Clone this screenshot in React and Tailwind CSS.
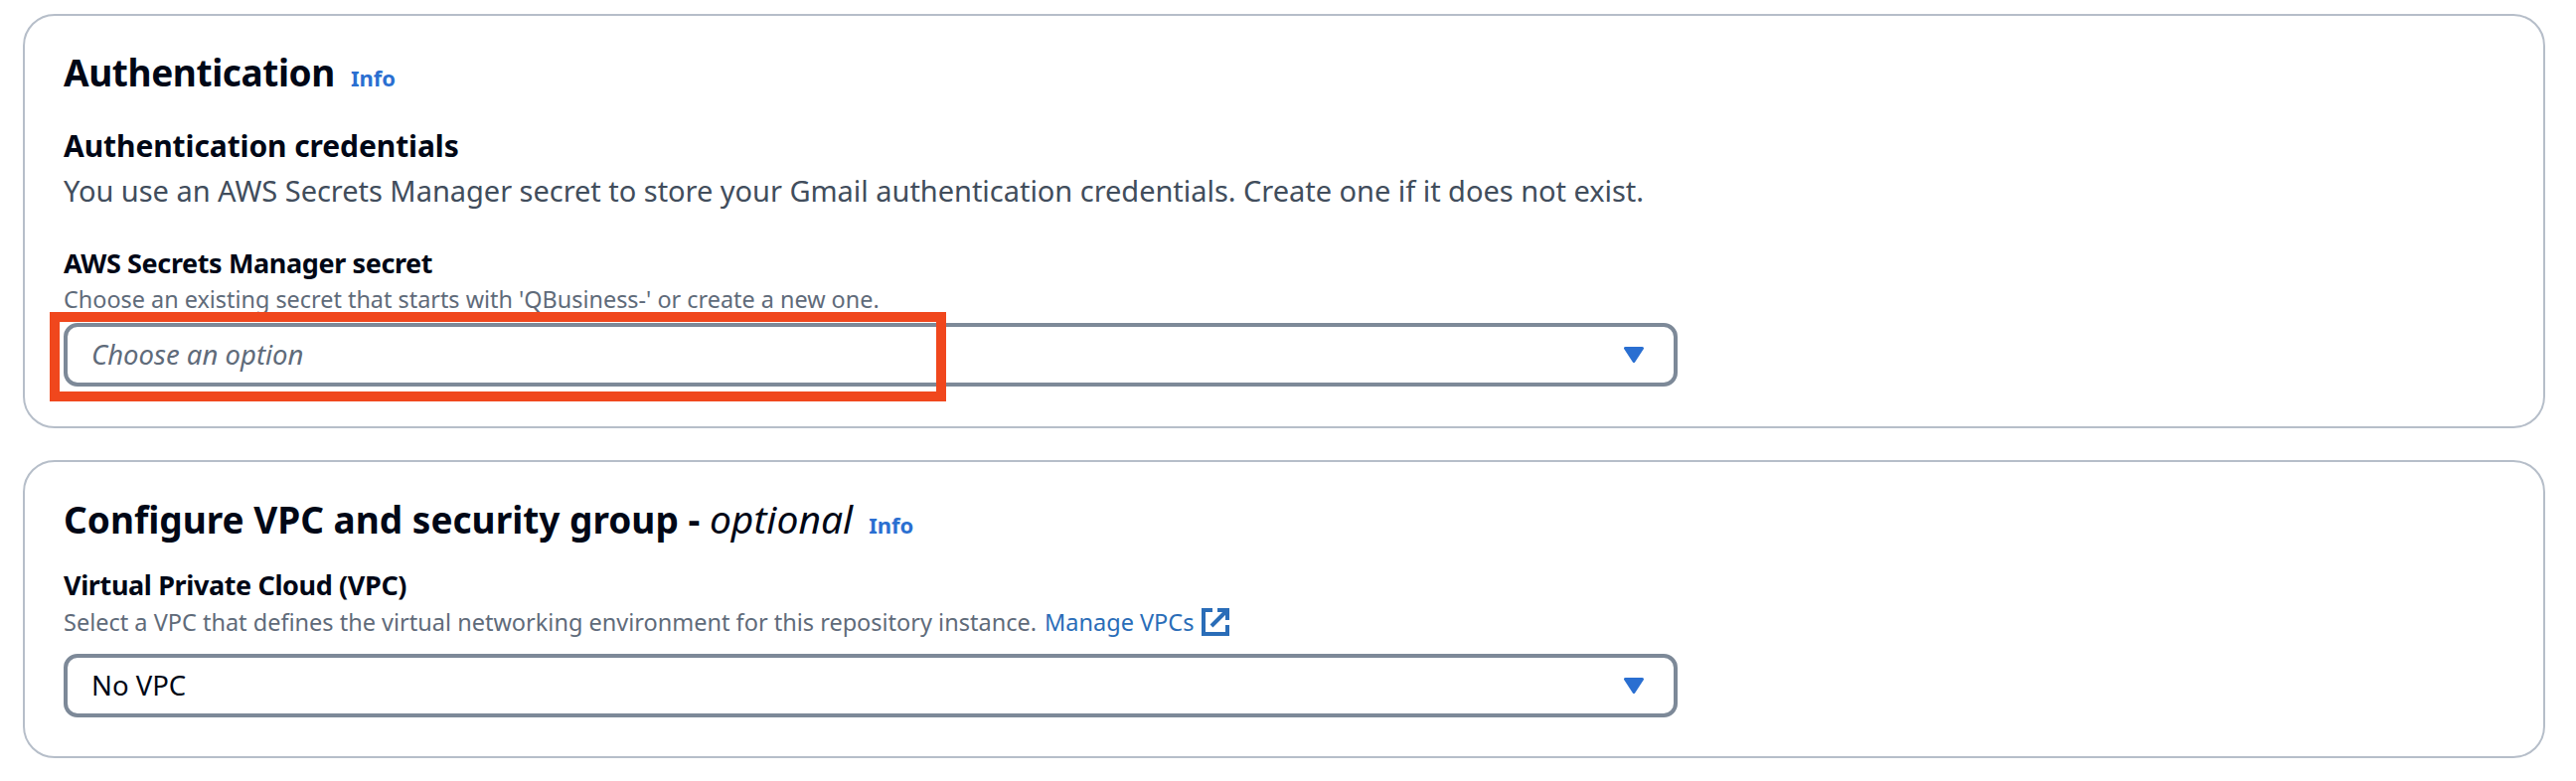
const Caret = () => (
  <svg width="20" height="16" viewBox="0 0 20 16" className="shrink-0">
    <path d="M1.5 1.5h17L10 14.5z" fill="#2a6fd1" stroke="#2a6fd1" strokeWidth="3" strokeLinejoin="round" />
  </svg>
);

const ExternalIcon = () => (
  <svg width="28" height="28" viewBox="0 0 28 28" fill="none" stroke="#2a6db8" strokeWidth="4" className="ml-[8px] shrink-0">
    <path d="M11 2H2v24h24v-9" />
    <path d="M10 18 25 3" />
    <path d="M16 2h10v10" />
  </svg>
);

const Select = ({ value, placeholder }) => (
  <div className="flex h-[64px] w-[1624px] items-center justify-between rounded-[14px] border-4 border-[#7d8998] bg-white pl-[24px] pr-[30px]">
    <span className={placeholder ? 'text-[27.5px] italic text-[#5f6b7a]' : 'text-[27.5px] text-[#000716]'}>{value}</span>
    <Caret />
  </div>
);

const Card = ({ className, children }) => (
  <section className={`relative w-[2538px] rounded-[32px] border-2 border-[#b6bec9] bg-white px-[39px] ${className}`}>
    {children}
  </section>
);

export default function App() {
  return (
    <div className="h-[786px] w-[2592px] overflow-hidden bg-white pl-[23px] pt-[14px] font-['Noto_Sans',sans-serif] text-[#000716]">
      <Card className="h-[417px] pt-[31px]">
        <div className="flex items-baseline">
          <h2 className="text-[37px] font-bold leading-[52px] tracking-[-0.4px]">Authentication</h2>
          <a className="ml-[16px] text-[22px] font-bold text-[#2a6fd1]">Info</a>
        </div>
        <h3 className="mt-[28px] text-[30px] font-bold leading-[40px] tracking-[-0.1px]">Authentication credentials</h3>
        <p className="mt-[3px] text-[29px] leading-[44px] tracking-[-0.03px] text-[#414d5c]">You use an AWS Secrets Manager secret to store your Gmail authentication credentials. Create one if it does not exist.</p>
        <label className="mt-[32px] block text-[27px] font-bold leading-[38px] tracking-[-0.38px]">AWS Secrets Manager secret</label>
        <p className="text-[23.4px] leading-[34px] text-[#5f6b7a]">Choose an existing secret that starts with 'QBusiness-' or create a new one.</p>
        <div className="mt-[7px]"><Select value="Choose an option" placeholder /></div>
        <div className="absolute left-[25px] top-[298px] h-[90px] w-[902px] border-[10px] border-[#f0471d]" />
      </Card>
      <Card className="mt-[32px] h-[300px] pt-[31px]">
        <div className="flex items-baseline">
          <h2 className="text-[37px] font-bold leading-[52px]">Configure VPC and security group - <em className="text-[39px] font-normal">optional</em></h2>
          <a className="ml-[16px] text-[22px] font-bold text-[#2a6fd1]">Info</a>
        </div>
        <label className="mt-[21px] block text-[27px] font-bold leading-[38px] tracking-[-0.38px]">Virtual Private Cloud (VPC)</label>
        <p className="mt-[1px] flex items-center text-[23.5px] leading-[34px] text-[#5f6b7a]">
          Select a VPC that defines the virtual networking environment for this repository instance.
          <a className="ml-[8px] text-[#2a6db8]">Manage VPCs</a>
          <ExternalIcon />
        </p>
        <div className="mt-[15px]"><Select value="No VPC" /></div>
      </Card>
    </div>
  );
}
